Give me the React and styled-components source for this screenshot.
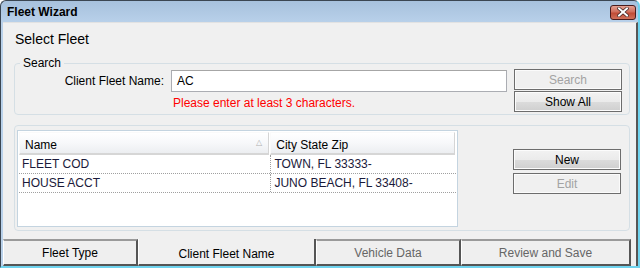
import React from "react";
import styled, { createGlobalStyle, css } from "styled-components";

const Global = createGlobalStyle`
  html, body { margin: 0; padding: 0; background: #fff; }
  body { font-family: "Liberation Sans", Arial, sans-serif; font-size: 12px; color: #000; }
  * { box-sizing: border-box; }
`;

const Window = styled.div`
  width: 640px;
  height: 268px;
  display: flex;
  flex-direction: column;
  background: linear-gradient(#a7c1dd, #b9d1ea 22px, #b9d1ea);
  border-top: 1px solid #3b4652;
  border-left: 1px solid #3b4652;
  border-right: 2px solid #6fd3ee;
  border-bottom: 2px solid #6fd3ee;
  border-radius: 6px 6px 0 0;
  overflow: hidden;
`;

const TitleBar = styled.div`
  height: 21px;
  display: flex;
  align-items: center;
  justify-content: space-between;
  padding: 0 2px 0 6px;
`;

const TitleText = styled.span`
  font-weight: bold;
  font-size: 12px;
  color: #000;
  font-family: "Liberation Sans", Arial, sans-serif;
`;

const CloseButton = styled.div`
  width: 26px;
  height: 15px;
  border: 1px solid #4a1c1c;
  border-radius: 3px;
  background: linear-gradient(#e5a193, #d06e5c 45%, #c04c36 55%, #d0705a);
  display: flex;
  align-items: center;
  justify-content: center;
  margin-top: 1px;
`;

const Client = styled.div`
  flex: 1;
  margin: 0 0 0 2px;
  background: #f0f0f0;
  border-top: 1px solid #e2e2e2;
  border-right: 2px solid #565656;
  display: flex;
  flex-direction: column;
  min-height: 0;
`;

const Heading = styled.div`
  font-size: 14px;
  line-height: 18px;
  margin: 7px 0 0 12px;
`;

const Group = styled.div`
  margin: ${(p) => p.$mt}px 6px 0 11px;
  border: 1px solid #d5dfe5;
  border-radius: 4px;
  height: ${(p) => p.$h}px;
  display: flex;
  flex-direction: column;
`;

const GroupLegend = styled.div`
  align-self: flex-start;
  margin: -8px 0 0 5px;
  padding: 0 3px;
  background: #f0f0f0;
  font-size: 12px;
  line-height: 14px;
  height: 14px;
`;

const SearchRow = styled.div`
  display: flex;
  align-items: flex-start;
  margin-top: ${(p) => p.$mt}px;
`;

const FieldLabel = styled.div`
  width: 149px;
  text-align: right;
  padding-top: 5px;
  line-height: 14px;
`;

const FieldCol = styled.div`
  margin-left: 7px;
  width: 336px;
  display: flex;
  flex-direction: column;
`;

const Input = styled.div`
  height: 22px;
  margin-top: 1px;
  border: 1px solid #abadb3;
  border-top-color: #a6a6a6;
  background: #fff;
  padding: 3px 5px;
  line-height: 14px;
`;

const ErrorText = styled.div`
  color: #ff0000;
  margin: 4px 0 0 2px;
  line-height: 14px;
`;

const ButtonCol = styled.div`
  margin-left: ${(p) => p.$ml}px;
  display: flex;
  flex-direction: column;
  gap: ${(p) => p.$gap}px;
  padding-top: ${(p) => p.$pt || 0}px;
`;

const Button = styled.div`
  width: 108px;
  height: 21px;
  display: flex;
  align-items: center;
  justify-content: center;
  line-height: 14px;
  ${(p) =>
    p.$disabled
      ? css`
          border: 1px solid #6d6d6d;
          color: #a3a3a3;
          background: #f0f0f0;
          box-shadow: inset 0 0 0 1px #fbfbfb;
        `
      : css`
          border: 1px solid #6d6d6d;
          color: #000;
          background: linear-gradient(#f2f2f2, #ebebeb 50%, #dcdcdc 51%, #cfcfcf);
          box-shadow: inset 0 0 0 1px #fcfcfc;
        `}
`;

const ListRow = styled.div`
  display: flex;
  align-items: flex-start;
  padding: 4px 0 0 2px;
`;

const Table = styled.div`
  width: 441px;
  height: 97px;
  border: 1px solid #c4d4e0;
  background: #fff;
  display: flex;
  flex-direction: column;
`;

const HeaderRow = styled.div`
  display: flex;
  height: 23px;
  margin: 1px 1px 0 1px;
`;

const HeaderCell = styled.div`
  position: relative;
  width: ${(p) => p.$w}px;
  height: 23px;
  padding: 5px 5px;
  line-height: 14px;
  background: linear-gradient(#ffffff, #f7f8fa 50%, #eceef1);
  border: 1px solid #d5d5d5;
  border-top-color: #fafafa;
  border-left-color: #fafafa;
  border-bottom: 2px solid #d6d6d6;
  margin-right: 1px;
  color: #000;
`;

const SortGlyph = styled.span`
  position: absolute;
  right: 6px;
  top: 6px;
  font-size: 8px;
  color: #b0b0b0;
  line-height: 8px;
`;

const DataRow = styled.div`
  display: flex;
  height: 19px;
  margin: 0 1px;
  border-bottom: 1px dotted #a0a0a0;
`;

const DataCell = styled.div`
  width: ${(p) => p.$w}px;
  padding: 2px 3px;
  line-height: 14px;
  color: #1a1a3a;
  border-right: ${(p) => (p.$sep ? "1px dotted #a0a0a0" : "none")};
`;

const Tabs = styled.div`
  margin-top: auto;
  display: flex;
  height: 27px;
  align-items: stretch;
`;

const Tab = styled.div`
  width: ${(p) => p.$w}px;
  display: flex;
  justify-content: center;
  line-height: 14px;
  ${(p) =>
    p.$active
      ? css`
          padding-top: 8px;
          color: #000;
          background: #f0f0f0;
          border-left: 1px solid #ffffff;
          border-right: 2px solid #555;
          border-bottom: 2px solid #555;
        `
      : css`
          padding-top: 5px;
          color: ${p.$dim ? "#666" : "#000"};
          background: #efefef;
          border-top: 2px solid #9a9a9a;
          border-left: 1px solid #fff;
          border-right: 2px solid #555;
          border-bottom: 2px solid #555;
        `}
`;

export default function App() {
  return (
    <>
      <Global />
      <Window>
        <TitleBar>
          <TitleText>Fleet Wizard</TitleText>
          <CloseButton>
            <svg width="12" height="10" viewBox="0 0 12 10">
              <path d="M2 1.5 L10 8.5 M10 1.5 L2 8.5" stroke="#3a2020" strokeWidth="3.4" strokeLinecap="square" />
              <path d="M2 1.5 L10 8.5 M10 1.5 L2 8.5" stroke="#ffffff" strokeWidth="2" strokeLinecap="square" />
            </svg>
          </CloseButton>
        </TitleBar>
        <Client>
          <Heading>Select Fleet</Heading>
          <Group $mt={15} $h={52}>
            <GroupLegend>Search</GroupLegend>
            <SearchRow $mt={-1}>
              <FieldLabel>Client Fleet Name:</FieldLabel>
              <FieldCol>
                <Input>AC</Input>
                <ErrorText>Please enter at least 3 characters.</ErrorText>
              </FieldCol>
              <ButtonCol $ml={7} $gap={1}>
                <Button $disabled>Search</Button>
                <Button>Show All</Button>
              </ButtonCol>
            </SearchRow>
          </Group>
          <Group $mt={10} $h={106}>
            <ListRow>
              <Table>
                <HeaderRow>
                  <HeaderCell $w={252}>
                    Name
                    <SortGlyph>△</SortGlyph>
                  </HeaderCell>
                  <HeaderCell $w={186}>City State Zip</HeaderCell>
                </HeaderRow>
                <DataRow>
                  <DataCell $w={253} $sep>FLEET COD</DataCell>
                  <DataCell $w={185}>TOWN, FL 33333-</DataCell>
                </DataRow>
                <DataRow>
                  <DataCell $w={253} $sep>HOUSE ACCT</DataCell>
                  <DataCell $w={185}>JUNO BEACH, FL 33408-</DataCell>
                </DataRow>
              </Table>
              <ButtonCol $ml={55} $gap={3} $pt={19}>
                <Button>New</Button>
                <Button $disabled>Edit</Button>
              </ButtonCol>
            </ListRow>
          </Group>
          <Tabs>
            <Tab $w={135}>Fleet Type</Tab>
            <Tab $w={178} $active>Client Fleet Name</Tab>
            <Tab $w={145} $dim>Vehicle Data</Tab>
            <Tab $w={170} $dim>Review and Save</Tab>
          </Tabs>
        </Client>
      </Window>
    </>
  );
}
